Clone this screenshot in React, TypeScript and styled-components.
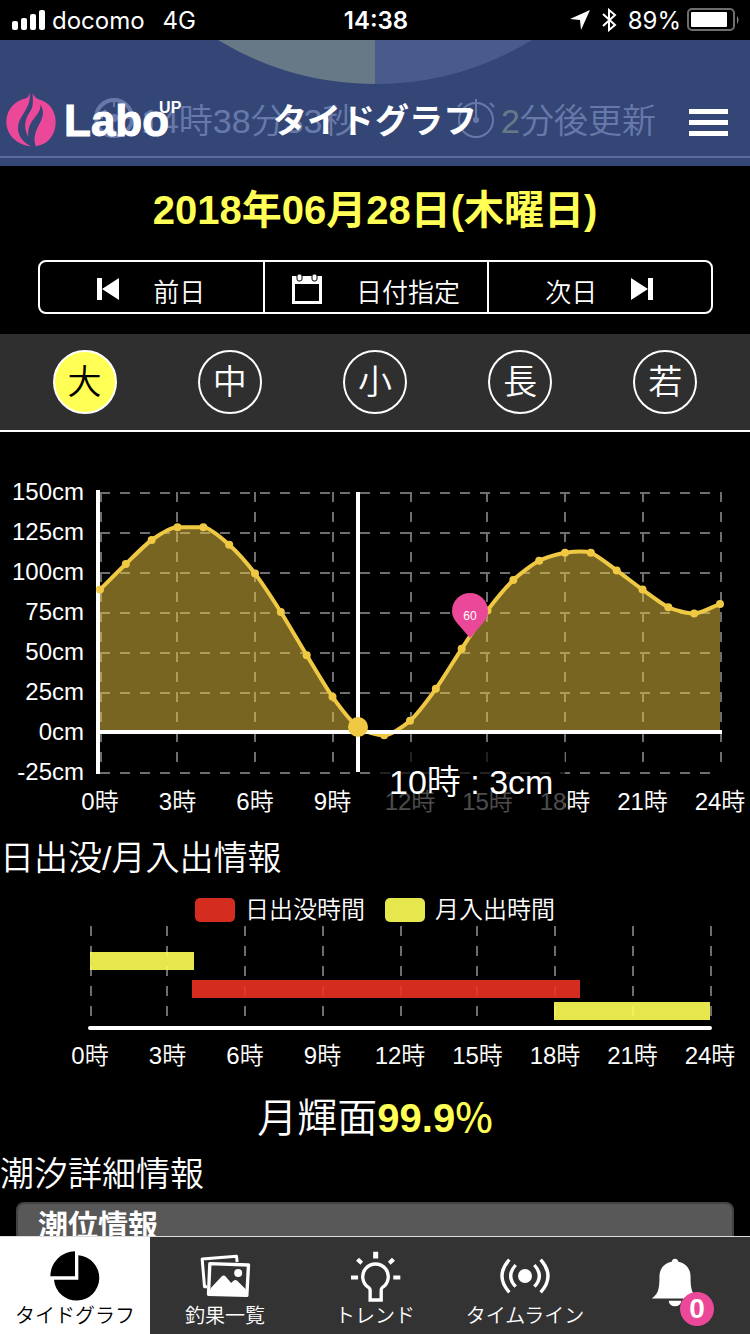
import React from "react";
import styled, { createGlobalStyle } from "styled-components";

const PINK = "#ec4899";
const YELLOW = "#ffff55";
const GOLD = "#efc944";
const FONT = '"Liberation Sans", "Noto Sans CJK JP", sans-serif';

const GlobalStyle = createGlobalStyle`
  * { box-sizing: border-box; }
  body {
    margin: 0;
    background: #000;
    color: #fff;
    font-family: ${FONT};
    font-weight: 350;
  }
  button { font: inherit; color: inherit; background: none; border: 0; padding: 0; cursor: pointer; }
  h1, h2, h3, p { margin: 0; font-weight: inherit; }
  a { color: inherit; text-decoration: none; }
  svg { display: block; }
`;

const Screen = styled.div`
  display: flex;
  flex-direction: column;
  height: 100vh;
  overflow: hidden;
`;

/* ---- status bar ---- */

const StatusBar = styled.div`
  flex: none;
  display: grid;
  grid-template-columns: 1fr auto 1fr;
  align-items: center;
  height: 40px;
  padding: 0 10px 0 12px;
  font-family: Inter, sans-serif;
  font-size: 24px;
  font-weight: 400;
`;

const StatusSide = styled.div<{ $end?: boolean }>`
  display: flex;
  align-items: center;
  justify-content: ${(p) => (p.$end ? "flex-end" : "flex-start")};
  gap: 6px;
`;

const Network = styled.span`
  margin-left: 12px;
`;

const Clock = styled.span`
  font-weight: 600;
`;

/* ---- scrolled content and the header over it ---- */

const Main = styled.main`
  position: relative;
  flex: 1;
  min-height: 0;
  overflow: hidden;
`;

const Header = styled.header`
  position: absolute;
  inset: 0 0 auto 0;
  z-index: 2;
  display: grid;
  grid-template-columns: 1fr auto 1fr;
  align-items: center;
  height: 126px;
  padding: 36px 6px 0;
  background: rgba(65, 88, 148, 0.8);
`;

const Brand = styled.a`
  display: flex;
  align-items: center;
  gap: 8px;
  font-weight: 700;

  & > svg { margin-bottom: 6px; }
`;

const BrandName = styled.span`
  font-size: 44px;
  line-height: 52px;
  -webkit-text-stroke: 1px #fff;
`;

const BrandSuffix = styled.sup`
  align-self: flex-start;
  margin-left: -18px;
  font-size: 16px;
  line-height: 36px;
`;

const PageTitle = styled.h1`
  font-size: 34px;
  line-height: 48px;
  font-weight: 700;
`;

const MenuButton = styled.button`
  justify-self: end;
  display: grid;
  gap: 6px;
  width: 41px;
  margin-right: 15px;
  padding: 3px 1px 0;
`;

const MenuLine = styled.span`
  height: 5px;
  background: #fff;
`;

const Hero = styled.div`
  display: flex;
  flex-direction: column;
  justify-content: space-between;
  height: 126px;
  padding-bottom: 8px;
  overflow: hidden;
`;

const HeroPie = styled.svg`
  width: 314px;
  height: 44px;
  margin: 0 auto;
`;

const HeroTimes = styled.div`
  display: grid;
  grid-template-columns: 1fr 1fr;
  align-items: center;
  height: 74px;
  padding-bottom: 4px;
  border-bottom: 2px solid #b8b8b8;
  font-size: 34px;
`;

const HeroTime = styled.span<{ $start: number }>`
  display: flex;
  align-items: center;
  gap: 6px;
  padding-left: ${(p) => p.$start}px;
  white-space: nowrap;
`;

const Highlight = styled.span`
  color: ${YELLOW};
`;

/* ---- date ---- */

const DateHeading = styled.h2`
  padding-top: 20px;
  color: ${YELLOW};
  font-size: 40px;
  line-height: 48px;
  font-weight: 700;
  text-align: center;
`;

const DateNav = styled.nav`
  display: grid;
  grid-template-columns: repeat(3, 1fr);
  width: 90%;
  height: 54px;
  margin: 26px auto 20px;
  border: 2px solid #fff;
  border-radius: 8px;
`;

const DateButton = styled.button<{ $gap: number }>`
  display: flex;
  align-items: center;
  justify-content: center;
  gap: ${(p) => p.$gap}px;
  padding-top: 4px;
  font-size: 26px;
  line-height: 32px;

  & + & { border-left: 2px solid #fff; }
  & > span { padding-top: 8px; }
`;

const TideTypes = styled.div`
  display: flex;
  justify-content: space-around;
  padding: 16px 12px;
  background: #2f2f2f;
  border-bottom: 2px solid #fff;
`;

const TideType = styled.button<{ $active: boolean }>`
  width: 64px;
  height: 64px;
  border: 2px solid #fff;
  border-radius: 50%;
  background: ${(p) => (p.$active ? YELLOW : "transparent")};
  color: ${(p) => (p.$active ? "#000" : "#fff")};
  font-size: 34px;
  line-height: 56px;
`;

/* ---- charts ---- */

const Chart = styled.svg<{ $top: number }>`
  width: 100%;
  height: auto;
  margin-top: ${(p) => p.$top}px;
  font-size: 24px;
  fill: #fff;
`;

const SectionTitle = styled.h2<{ $top: number }>`
  margin-top: ${(p) => p.$top}px;
  font-size: 34px;
  line-height: 48px;
`;

const Legend = styled.div`
  display: flex;
  justify-content: center;
  gap: 20px;
  margin-top: 16px;
  font-size: 24px;
  line-height: 24px;
`;

const LegendItem = styled.span`
  display: flex;
  gap: 10px;
`;

const Swatch = styled.span<{ $color: string }>`
  width: 40px;
  height: 24px;
  border-radius: 5px;
  background: ${(p) => p.$color};
  opacity: 0.9;
`;

const MoonPhase = styled.p`
  margin-top: 16px;
  font-size: 40px;
  line-height: 56px;
  text-align: center;
`;

const MoonValue = styled.strong`
  color: ${YELLOW};
  font-weight: 700;
`;

const Percent = styled.span`
  font-family: "Noto Sans CJK JP", sans-serif;
  font-weight: 500;
  line-height: 1;
`;

const DetailPanel = styled.section`
  height: 80px;
  margin: 4px 16px 0;
  padding: 0 20px;
  border: 2px solid #424242;
  border-radius: 8px;
  background: #585858;
`;

const DetailTitle = styled.h3`
  font-size: 30px;
  line-height: 44px;
  font-weight: 700;
`;

/* ---- tab bar ---- */

const TabBar = styled.nav`
  flex: none;
  display: grid;
  grid-template-columns: repeat(5, 1fr);
  height: 98px;
  border-top: 1px solid #ddd;
  background: #333;
`;

const Tab = styled.a<{ $active?: boolean }>`
  display: flex;
  flex-direction: column;
  align-items: center;
  padding-top: 14px;
  background: ${(p) => (p.$active ? "#fff" : "transparent")};
  color: ${(p) => (p.$active ? "#000" : "#fff")};
  font-size: 20px;
  line-height: 30px;
  white-space: nowrap;
`;

const TabIcon = styled.span`
  position: relative;
  display: grid;
  place-items: center;
  height: 50px;
`;

const BellIcon = styled(TabIcon)`
  height: 62px;
`;

const Badge = styled.span`
  position: absolute;
  left: 29px;
  top: 41px;
  width: 34px;
  height: 34px;
  border-radius: 50%;
  background: ${PINK};
  color: #fff;
  font-size: 28px;
  line-height: 34px;
  font-weight: 700;
  text-align: center;
`;

/* ---- chart data ---- */

const HOURS = [0, 3, 6, 9, 12, 15, 18, 21, 24];
const LEVELS = [150, 125, 100, 75, 50, 25, 0, -25];
const TIDE = [89, 105, 120, 128, 128, 117, 99, 75, 48, 22, 3, -2, 7, 27, 52, 76, 95, 107, 112, 112, 101, 89, 78, 74, 80];
const GRID = { stroke: "#6e6e6e", strokeWidth: 2, strokeDasharray: "10 10" };

const HOUR_WIDTH = 620 / 24;
const tideX = (hour: number) => 100 + hour * HOUR_WIDTH;
const tideY = (cm: number) => 252 - cm * 1.6;
const spanX = (hour: number) => 90 + hour * HOUR_WIDTH;
const snap = (x: number) => Math.floor(x / 2) * 2 + 1;

/* Smooth curve through the hourly levels, flat across the morning peak. */
function curve(values: number[]) {
  const step = values.map((v, i) => (i + 1 < values.length ? values[i + 1] - v : 0));
  const slope = values.map((_, i) => {
    if (i === 0) return step[0];
    if (i === values.length - 1) return step[i - 1];
    const a = step[i - 1];
    const b = step[i];
    return a * b < 0 || (a * b === 0 && i < 10) ? 0 : (a + b) / 2;
  });
  return values.reduce((path, v, i) => {
    if (i === 0) return `M${tideX(0)} ${tideY(v)}`;
    const x = tideX(i);
    const third = HOUR_WIDTH / 4;
    return `${path} C${tideX(i - 1) + third} ${tideY(values[i - 1] + slope[i - 1] / 4)} ${x - third} ${tideY(v - slope[i] / 4)} ${x} ${tideY(v)}`;
  }, "");
}

function TideChart() {
  const line = curve(TIDE);
  return (
    <Chart $top={48} viewBox="0 0 750 340" role="img" aria-label="潮位グラフ">
      {LEVELS.map((cm) => (
        <g key={cm}>
          <text x="84" y={tideY(cm) + 8} textAnchor="end">{cm}cm</text>
          {cm !== 0 && <line x1="100" x2="720" y1={tideY(cm) + 1} y2={tideY(cm) + 1} {...GRID} />}
        </g>
      ))}
      {HOURS.map((h) => (
        <g key={h}>
          <line x1={snap(tideX(h))} x2={snap(tideX(h))} y1="12" y2="292" {...GRID} />
          <text x={tideX(h)} y="330" textAnchor="middle">{h}時</text>
        </g>
      ))}
      <line x1="98" x2="98" y1="10" y2="294" stroke="#fff" strokeWidth="4" />
      <clipPath id="above-zero"><rect x="100" y="0" width="620" height="252" /></clipPath>
      <path d={`${line} V252 H100 Z`} fill="rgba(240,201,68,0.5)" clipPath="url(#above-zero)" />
      <path d={line} fill="none" stroke={GOLD} strokeWidth="4" />
      {TIDE.map((cm, h) => <circle key={h} cx={tideX(h)} cy={tideY(cm)} r="4" fill={GOLD} />)}
      <line x1="98" x2="722" y1="252" y2="252" stroke="#fff" strokeWidth="4" />
      <line x1="358" x2="358" y1="12" y2="292" stroke="#fff" strokeWidth="4" />
      <circle cx="358" cy="247" r="10" fill={GOLD} />
      <path d="M470 158 L457 143 C454 139 452 136 452 131 A18 18 0 0 1 488 131 C488 136 486 139 483 143 Z" fill={PINK} />
      <text x="470" y="140" textAnchor="middle" fontSize="12">60</text>
      <rect x="379" y="270" width="186" height="64" fill="#000" fillOpacity="0.7" />
      <text x="389" y="314" fontSize="34">10時 : 3cm</text>
    </Chart>
  );
}

const SPANS = [
  { x: 90, end: 194, y: 26, color: YELLOW },
  { x: 192, end: 580, y: 54, color: "#ec3124" },
  { x: 554, end: 710, y: 76, color: YELLOW },
];

function SunMoonChart() {
  return (
    <Chart $top={4} viewBox="0 0 750 148" role="img" aria-label="日出没と月入出の時間">
      {HOURS.map((h) => (
        <g key={h}>
          <line x1={snap(spanX(h))} x2={snap(spanX(h))} y1="0" y2="92" {...GRID} />
          <text x={spanX(h)} y="138" textAnchor="middle">{h}時</text>
        </g>
      ))}
      {SPANS.map((s) => (
        <rect key={s.x} x={s.x} y={s.y} width={s.end - s.x} height="18" fill={s.color} opacity="0.9" />
      ))}
      <line x1="90" x2="710" y1="102" y2="102" stroke="#fff" strokeWidth="4" strokeLinecap="round" />
    </Chart>
  );
}

export default function App() {
  return (
    <Screen>
      <GlobalStyle />
      <StatusBar>
        <StatusSide>
          <svg width="34" height="20" viewBox="0 0 34 20" fill="#fff">
            <rect x="0" y="11" width="6" height="9" rx="2" />
            <rect x="9" y="8" width="6" height="12" rx="2" />
            <rect x="18" y="4" width="6" height="16" rx="2" />
            <rect x="27" y="0" width="6" height="20" rx="2" />
          </svg>
          <span>docomo</span>
          <Network>4G</Network>
        </StatusSide>
        <Clock>14:38</Clock>
        <StatusSide $end>
          <svg width="20" height="20" viewBox="0 0 20 20"><path d="M20 0 L11 20 L10 10 L0 9 Z" fill="#fff" /></svg>
          <svg width="26" height="24" viewBox="0 0 26 24">
            <path d="M7 6 L19 17 L13 22 V2 L19 7 L7 18" fill="none" stroke="#fff" strokeWidth="2" />
          </svg>
          <span>89%</span>
          <svg width="53" height="24" viewBox="0 0 53 24">
            <rect x="1" y="1" width="46" height="21" rx="4" fill="none" stroke="#6e6e6e" strokeWidth="2" />
            <rect x="4" y="4" width="36" height="15" rx="1" fill="#fff" />
            <path d="M50 8 Q53 11.500 50 16 Z" fill="#8a8a8a" />
          </svg>
        </StatusSide>
      </StatusBar>

      <Main>
        <Header>
          <Brand href="#home">
            <svg width="50" height="57" viewBox="17 12 150 171" fill={PINK}>
              <path d="M85 15 C88 26 84 32 79 36 C45 43 18 70 18 108 C18 150 55 178 92 181 C62 166 49 142 54 115 C62 84 100 54 85 15 Z" />
              <path d="M97 22 C98 52 100 62 86 82 C68 110 74 135 84 153 C82 125 89 112 103 95 C118 76 123 66 119 54 C136 78 126 98 112 124 C102 146 100 160 106 181 C142 176 166 148 166 108 C166 74 146 48 114 40 C106 36 101 30 97 22 Z" />
            </svg>
            <BrandName>Labo</BrandName>
            <BrandSuffix>UP</BrandSuffix>
          </Brand>
          <PageTitle>タイドグラフ</PageTitle>
          <MenuButton aria-label="メニュー">
            <MenuLine />
            <MenuLine />
            <MenuLine />
          </MenuButton>
        </Header>

        <Hero>
          <HeroPie viewBox="0 0 314 44">
            <path d="M0 0 A303 303 0 0 0 157 44 V0 Z" fill={YELLOW} />
            <path d="M157 0 V44 A303 303 0 0 0 314 0 Z" fill="#6b6b6b" />
          </HeroPie>
          <HeroTimes>
            <HeroTime $start={93}>
              <svg width="42" height="42" viewBox="0 0 42 42" fill="none" stroke="#fff" strokeWidth="4">
                <circle cx="21" cy="21" r="18" />
                <path d="M21 5 V10 M21 32 V37 M5 21 H10 M32 21 H37 M21 21 L11 13 M21 21 H32" strokeWidth="2" />
                <circle cx="21" cy="21" r="4" fill="#fff" stroke="none" />
              </svg>
              <span>14時38分33秒</span>
            </HeroTime>
            <HeroTime $start={82}>
              <svg width="38" height="42" viewBox="0 0 38 42" fill="none" stroke="#fff" strokeWidth="2">
                <circle cx="19" cy="23" r="17" />
                <path d="M19 2 V23 M33 6 L37 10 M5 6 L1 10" />
                <circle cx="19" cy="23" r="3" fill="#fff" stroke="none" />
              </svg>
              <span><Highlight>2</Highlight>分後更新</span>
            </HeroTime>
          </HeroTimes>
        </Hero>

        <DateHeading>2018年06月28日(木曜日)</DateHeading>
        <DateNav aria-label="日付">
          <DateButton $gap={33}>
            <svg width="23" height="22" viewBox="0 0 23 22" fill="#fff"><path d="M0 0 H5 V11 L22 0 V22 L5 11 V22 H0 Z" /></svg>
            <span>前日</span>
          </DateButton>
          <DateButton $gap={34}>
            <svg width="30" height="30" viewBox="0 0 30 30">
              <path d="M0 2 H30 V30 H0 Z M3 10 V27 H27 V10 Z" fill="#fff" fillRule="evenodd" />
              <rect x="5" y="0" width="5" height="7" rx="2" fill="#fff" stroke="#000" />
              <rect x="20" y="0" width="5" height="7" rx="2" fill="#fff" stroke="#000" />
            </svg>
            <span>日付指定</span>
          </DateButton>
          <DateButton $gap={34}>
            <span>次日</span>
            <svg width="23" height="22" viewBox="0 0 23 22" fill="#fff"><path d="M22 0 H17 V11 L0 0 V22 L17 11 V22 H22 Z" /></svg>
          </DateButton>
        </DateNav>

        <TideTypes>
          {["大", "中", "小", "長", "若"].map((name, i) => (
            <TideType key={name} $active={i === 0} aria-pressed={i === 0}>{name}</TideType>
          ))}
        </TideTypes>

        <TideChart />

        <SectionTitle $top={14}>日出没/月入出情報</SectionTitle>
        <Legend>
          <LegendItem><Swatch $color="#ec3124" />日出没時間</LegendItem>
          <LegendItem><Swatch $color={YELLOW} />月入出時間</LegendItem>
        </Legend>
        <SunMoonChart />

        <MoonPhase>月輝面<MoonValue>99.9<Percent>%</Percent></MoonValue></MoonPhase>

        <SectionTitle $top={4}>潮汐詳細情報</SectionTitle>
        <DetailPanel>
          <DetailTitle>潮位情報</DetailTitle>
        </DetailPanel>
      </Main>

      <TabBar>
        <Tab href="#tide" $active aria-current="page">
          <TabIcon>
            <svg width="50" height="50" viewBox="149 512 150 150" fill="#000">
              <path d="M224 513 V588 H150 A75 75 0 0 1 224 513 Z" />
              <path d="M234 525 A68 68 0 1 1 161 598 H234 Z" />
            </svg>
          </TabIcon>
          タイドグラフ
        </Tab>
        <Tab href="#catches">
          <TabIcon>
            <svg width="51" height="44" viewBox="28 30 152 132" fill="none" stroke="#fff" strokeLinejoin="round">
              <path d="M49 128 H41 L34 45 L137 37 L139 54" strokeWidth="9" />
              <path d="M57 59 L173 63 L168 154 L53 151 Z" strokeWidth="10" />
              <path d="M53 150 L60 132 L93 97 Q99 91 105 98 L121 117 L128 110 Q134 105 140 111 L167 138 L166 155 Z" fill="#fff" stroke="none" />
              <circle cx="142" cy="87" r="12" fill="#fff" stroke="none" />
            </svg>
          </TabIcon>
          釣果一覧
        </Tab>
        <Tab href="#trend">
          <TabIcon>
            <svg width="51" height="51" viewBox="477 20 152 152">
              <path d="M537 166 V136 Q537 132 533 129 A38 38 0 1 1 573 129 Q570 132 570 136 V166 Z" fill="none" stroke="#fff" strokeWidth="10" />
              <path d="M546 22 H561 V42 H546 Z M480 93 H501 V105 H480 Z M606 93 H627 V105 H606 Z M504 40 L516 52 L508 61 L495 49 Z M602 40 L611 49 L598 61 L590 52 Z" fill="#fff" />
            </svg>
          </TabIcon>
          トレンド
        </Tab>
        <Tab href="#timeline">
          <TabIcon>
            <svg width="50" height="36" viewBox="374 534 150 108" fill="none" stroke="#fff" strokeWidth="10">
              <circle cx="449" cy="588" r="21" fill="#fff" stroke="none" />
              <path d="M421 555 Q391 588 421 620 M402 539 Q358 588 402 637 M477 555 Q507 588 477 620 M496 539 Q540 588 496 637" />
            </svg>
          </TabIcon>
          タイムライン
        </Tab>
        <Tab href="#notices" aria-label="お知らせ">
          <BellIcon>
            <svg width="48" height="49" viewBox="828 532 144 148" fill="#fff">
              <path d="M900 534 C905 534 909 538 910 543 C932 548 947 562 947 590 C947 630 952 640 970 654 H830 C848 640 853 630 853 590 C853 562 868 548 890 543 C891 538 895 534 900 534 Z" />
              <path d="M881 661 H919 A19 17 0 0 1 881 661 Z" />
            </svg>
            <Badge>0</Badge>
          </BellIcon>
        </Tab>
      </TabBar>
    </Screen>
  );
}
